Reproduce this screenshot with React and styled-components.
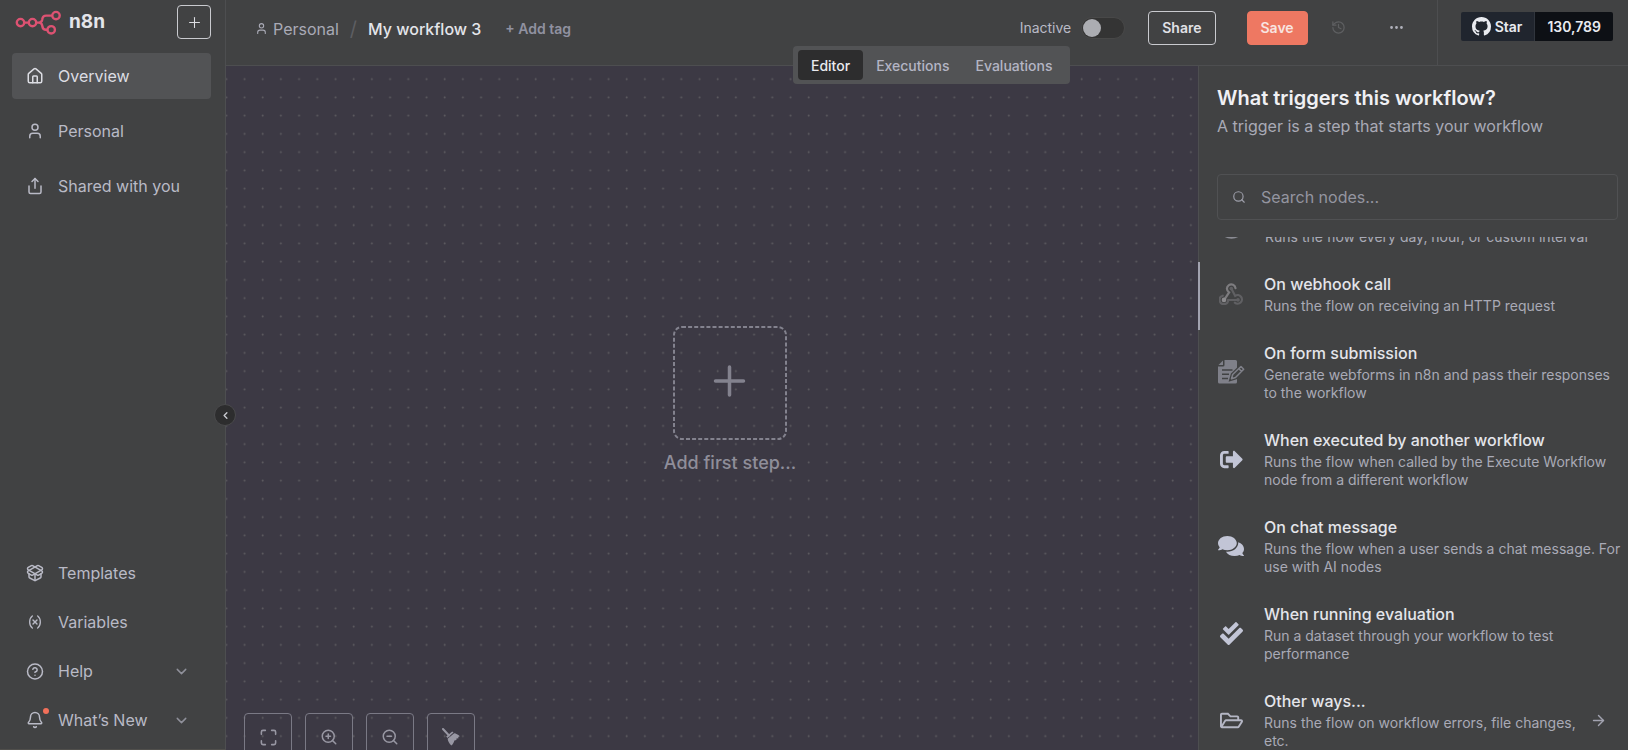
import React, { useEffect, useRef } from "react";
import styled, { createGlobalStyle, css } from "styled-components";
import {
  ArrowRight,
  Bell,
  ChevronDown,
  ChevronLeft,
  CircleQuestionMark,
  Clock,
  Ellipsis,
  History,
  House,
  Maximize,
  PackageOpen,
  Plus,
  Search,
  Share,
  User,
  Variable,
  ZoomIn,
  ZoomOut,
} from "lucide-react";
import {
  FaCheckDouble,
  FaComments,
  FaRegFolderOpen,
  FaSignOutAlt,
} from "react-icons/fa";

const GlobalStyle = createGlobalStyle`
  * {
    box-sizing: border-box;
  }

  body {
    margin: 0;
    background-color: #414243;
    color: #e4e5ea;
    font-family: Inter, "Liberation Sans", sans-serif;
  }

  h1, h2, h3, p, ul {
    margin: 0;
    padding: 0;
  }

  button, input {
    font-family: inherit;
  }

  a {
    color: inherit;
    text-decoration: none;
  }
`;

const Page = styled.div`
  display: flex;
  height: 100vh;
  overflow: hidden;
`;

const Sidebar = styled.aside`
  position: relative;
  flex: 0 0 226px;
  display: flex;
  flex-direction: column;
  justify-content: space-between;
  padding: 5px 14px 6px 12px;
  border-right: 1px solid #4d4e50;
  border-bottom: 1px solid #504f4c;
`;

const SidebarTop = styled.div`
  display: flex;
  align-items: center;
  justify-content: space-between;
  height: 34px;
  margin-bottom: 14px;
`;

const Brand = styled.a`
  display: flex;
  align-items: center;
  gap: 8px;
  padding-left: 3px;
  font-size: 19px;
  line-height: 24px;
  font-weight: 700;
`;

const SquareButton = styled.button`
  display: flex;
  align-items: center;
  justify-content: center;
  width: 34px;
  height: 34px;
  padding: 0;
  border: 1px solid #c9cacf;
  border-radius: 4px;
  background: none;
  color: #dcdde2;
  cursor: pointer;
`;

const Menu = styled.nav`
  display: flex;
  flex-direction: column;
  gap: ${({ $gap }) => $gap};
`;

const MenuItem = styled.a`
  display: flex;
  align-items: center;
  gap: 14px;
  height: 46px;
  padding: 0 21px 0 14px;
  border-radius: 4px;
  font-size: 16px;
  line-height: 24px;
  color: #b9bac6;

  ${({ $active }) =>
    $active &&
    css`
      background-color: #525355;
      color: #dcdde3;
    `}

  .chevron {
    margin-left: auto;
    color: #8f909a;
  }
`;

const MenuIcon = styled.span`
  position: relative;
  display: flex;
  justify-content: center;
  width: 18px;
`;

const Badge = styled.span`
  position: absolute;
  top: -3px;
  right: -5px;
  width: 6px;
  height: 6px;
  border-radius: 50%;
  background-color: #f2705a;
`;

const CollapseButton = styled.button`
  position: absolute;
  top: 404px;
  right: -11px;
  z-index: 2;
  display: flex;
  align-items: center;
  justify-content: center;
  width: 22px;
  height: 22px;
  padding: 0;
  border: 1px solid #4a4a4c;
  border-radius: 50%;
  background-color: #2d2d2e;
  color: #c9cad0;
  cursor: pointer;
`;

const Main = styled.div`
  flex: 1;
  min-width: 0;
  display: flex;
  flex-direction: column;
`;

const Header = styled.header`
  position: relative;
  display: flex;
  flex: 0 0 66px;
  border-bottom: 1px solid #4d4e50;
`;

const HeaderBar = styled.div`
  flex: 1;
  display: flex;
  align-items: center;
  justify-content: space-between;
  padding: 0 32px 10px 29px;
`;

const Breadcrumb = styled.div`
  display: flex;
  align-items: center;
  padding-top: 2px;
  font-size: 16px;
  line-height: 24px;
  color: #a9aab6;

  a {
    display: flex;
    align-items: center;
    gap: 5px;
  }
`;

const Slash = styled.span`
  margin: 0 11px;
  font-size: 20px;
  color: #5d5e62;
`;

const WorkflowName = styled.h1`
  font-size: 16px;
  line-height: 24px;
  font-weight: 500;
  color: #e4e5ea;
`;

const TagButton = styled.button`
  margin-left: 24px;
  padding: 0;
  border: none;
  background: none;
  font-size: 14px;
  font-weight: 600;
  color: #9091a0;
  cursor: pointer;
`;

const Actions = styled.div`
  display: flex;
  align-items: center;
`;

const SwitchLabel = styled.label`
  display: flex;
  align-items: center;
  gap: 10px;
  margin-right: 23px;
  font-size: 14px;
  color: #b9bac6;
`;

const Switch = styled.input`
  appearance: none;
  display: flex;
  align-items: center;
  width: 44px;
  height: 22px;
  margin: 0;
  padding: 1px;
  border: 1px solid #484848;
  border-radius: 11px;
  background-color: #343434;
  cursor: pointer;

  &::before {
    content: "";
    width: 18px;
    height: 18px;
    border-radius: 50%;
    background-color: #acadb2;
  }

  &:checked {
    justify-content: flex-end;
  }
`;

const Button = styled.button`
  height: 34px;
  padding: 0 13px;
  border: 1px solid #c9cacf;
  border-radius: 4px;
  background: none;
  font-size: 14px;
  font-weight: 600;
  color: #e0e1e6;
  cursor: pointer;

  ${({ $primary }) =>
    $primary &&
    css`
      margin: 0 23px 0 31px;
      border-color: #ee7862;
      background-color: #ee7862;
      color: #f8e4e0;
    `}
`;

const IconButton = styled.button`
  display: flex;
  padding: 0;
  border: none;
  background: none;
  color: ${({ $muted }) => ($muted ? "#5e5f61" : "#b0b1bb")};
  cursor: pointer;

  & + & {
    margin-left: 42px;
  }
`;

const GithubArea = styled.div`
  display: flex;
  align-items: center;
  padding: 0 15px 13px 23px;
  border-left: 1px solid #4d4e50;
`;

const GithubButton = styled.div`
  display: flex;
  height: 29px;
  border-radius: 2px;
  overflow: hidden;
  font-size: 14px;
  font-weight: 600;
  color: #e9ebf0;

  a {
    display: flex;
    align-items: center;
    gap: 4px;
    padding: 0 12px 0 11px;
    background-color: #20252e;
  }

  a + a {
    padding: 0 12px;
    border-left: 1px solid #30353d;
    background-color: #0d1015;
  }
`;

const Tabs = styled.div`
  position: absolute;
  top: 46px;
  left: 567px;
  z-index: 1;
  display: flex;
  padding: 4px 5px;
  border-radius: 4px;
  background-color: #525355;
`;

const Tab = styled.button`
  height: 30px;
  padding: 0 13px;
  border: none;
  border-radius: 4px;
  background-color: ${({ $active }) => ($active ? "#2d2d2e" : "transparent")};
  font-size: 14px;
  font-weight: 500;
  color: ${({ $active }) => ($active ? "#e9eaee" : "#b4b5c4")};
  cursor: pointer;
`;

const Workspace = styled.div`
  flex: 1;
  min-height: 0;
  display: flex;
`;

const Canvas = styled.section`
  position: relative;
  flex: 1;
  background-color: #3c3944;
`;

const Grid = styled.svg`
  position: absolute;
  inset: 0;
  width: 100%;
  height: 100%;
`;

const FirstStep = styled.div`
  position: absolute;
  top: 260px;
  left: 447px;
  display: flex;
  flex-direction: column;
  align-items: center;
  gap: 10px;
  width: 114px;
  font-size: 18px;
  line-height: 26px;
  font-weight: 500;
  color: #8f8e9a;
  white-space: nowrap;
`;

const StepButton = styled.button`
  position: relative;
  display: block;
  width: 114px;
  height: 114px;
  padding: 0;
  border: none;
  background: none;
  cursor: pointer;
`;

const CanvasControls = styled.div`
  position: absolute;
  top: 647px;
  left: 18px;
  display: flex;
  gap: 13px;
`;

const ControlButton = styled.button`
  display: flex;
  align-items: center;
  justify-content: center;
  width: 48px;
  height: 48px;
  padding: 0;
  border: 1px solid #7a7985;
  border-radius: 4px;
  background: none;
  color: #9897a3;
  cursor: pointer;
`;

const Panel = styled.aside`
  position: relative;
  flex: 0 0 430px;
  display: flex;
  flex-direction: column;
  border-left: 1px solid #4d4e50;
`;

const ResizeHandle = styled.span`
  position: absolute;
  top: 196px;
  left: -1px;
  width: 2px;
  height: 68px;
  background-color: #a2a3b0;
`;

const PanelHeader = styled.div`
  padding: 18px 10px 0 18px;

  h2 {
    font-size: 20px;
    line-height: 28px;
    font-weight: 600;
    color: #f0f0f4;
  }

  p {
    margin-top: 2px;
    font-size: 16px;
    line-height: 24px;
    color: #a9aab6;
  }
`;

const SearchBox = styled.label`
  display: flex;
  align-items: center;
  gap: 15px;
  height: 46px;
  margin: 36px 10px 17px 18px;
  padding: 0 14px;
  border: 1px solid #505153;
  border-radius: 4px;
  color: #9c9da8;

  input {
    flex: 1;
    min-width: 0;
    padding: 0;
    border: none;
    outline: none;
    background: none;
    font-size: 16px;
    color: #e4e5ea;
  }

  input::placeholder {
    color: #9495a0;
    opacity: 1;
  }
`;

const TriggerList = styled.ul`
  flex: 1;
  min-height: 0;
  overflow-y: auto;
  scrollbar-width: none;
  list-style: none;
`;

const Trigger = styled.li`
  display: flex;
  align-items: center;
  padding: 14px 4px 13px 18px;
`;

const TriggerIcon = styled.span`
  display: flex;
  flex: 0 0 28px;
  justify-content: center;
  margin-right: 19px;
  color: ${({ $color }) => $color};
`;

const TriggerText = styled.div`
  flex: 1;

  h3 {
    min-height: 22px;
    margin-bottom: 2px;
    font-size: 16px;
    line-height: 22px;
    font-weight: 500;
    color: #e4e5ea;
  }

  p {
    font-size: 14px;
    line-height: 18px;
    color: #a9aab6;
  }
`;

const MoreArrow = styled(ArrowRight)`
  margin: 0 17px 0 8px;
  color: #a2a3b0;
`;

const Logo = () => (
  <svg width="46" height="26" viewBox="0 0 46 26" fill="none" stroke="#dd5272" strokeWidth="2.4">
    <circle cx="5.5" cy="13.6" r="3.7" />
    <circle cx="17.5" cy="13.6" r="3.7" />
    <circle cx="41" cy="6.6" r="3.7" />
    <circle cx="36.2" cy="20.8" r="3.7" />
    <path d="M9.2 13.6h4.600M21.200 13.600h2.600c2 0 3-.9 3.400-2.800l.2-1.200c.4-2 1.600-3 3.600-3h6.300M23.800 13.600c2 0 3 .9 3.400 2.800l.2 1.400c.4 2 1.500 3 3.500 3h1.600" />
  </svg>
);

const GithubMark = () => (
  <svg width="19" height="19" viewBox="0 0 16 16" fill="currentColor">
    <path d="M8 0c4.42 0 8 3.58 8 8a8.013 8.013 0 0 1-5.45 7.59c-.4.08-.55-.17-.55-.38 0-.27.01-1.13.01-2.2 0-.75-.25-1.23-.54-1.48 1.78-.2 3.65-.88 3.65-3.95 0-.88-.31-1.59-.82-2.15.08-.2.36-1.02-.08-2.12 0 0-.67-.22-2.2.82-.64-.18-1.32-.27-2-.27-.68 0-1.36.09-2 .27-1.53-1.03-2.2-.82-2.2-.82-.44 1.1-.16 1.92-.08 2.12-.51.56-.82 1.28-.82 2.15 0 3.06 1.86 3.75 3.64 3.95-.23.2-.44.55-.51 1.07-.46.21-1.61.55-2.33-.66-.15-.24-.6-.83-1.23-.82-.67.01-.27.38.01.53.34.19.73.9.82 1.13.16.45.68 1.31 2.69.94 0 .67.01 1.3.01 1.49 0 .21-.15.45-.55.38A7.995 7.995 0 0 1 0 8c0-4.42 3.58-8 8-8Z" />
  </svg>
);

const WebhookIcon = () => (
  <svg width="24" height="22" viewBox="0 0 24 22" fill="none" strokeWidth="2.2" strokeLinecap="round">
    <path d="M12.300 5.500l3.900 7.400a4.300 4.300 0 1 1-.4 6.800M3.800 12.700a4.300 4.300 0 1 0 5.400 4.300H19" stroke="#606063" />
    <circle cx="12.300" cy="5.600" r="1.800" fill="#606063" />
    <circle cx="19" cy="16.900" r="1.800" fill="#606063" />
    <path d="M16.500 5.200a4.300 4.300 0 1 0-6.400 4.200L5.200 16.800" stroke="#7d7c7f" />
    <circle cx="5" cy="16.900" r="2.300" fill="#8b8a8d" />
  </svg>
);

const FormIcon = () => (
  <svg width="27" height="24" viewBox="0 0 27 24" fill="none">
    <path
      d="M6.500 0H17.500A1.500 1.500 0 0 1 19 1.500V22a1.500 1.500 0 0 1-1.500 1.500h-16A1.500 1.500 0 0 1 0 22V6.500h5a1.500 1.500 0 0 0 1.500-1.500z"
      fill="currentColor"
    />
    <path d="M5 .5V5H.5z" fill="currentColor" />
    <path d="M4 10h10.500M4 14.300h7M4 18.600h6" stroke="#414243" strokeWidth="1.500" />
    <path d="M13.500 18.800l1.200-4.300 8.300-8 2.700 2.700-8.200 8.300z" stroke="#414243" strokeWidth="4" />
    <path
      d="M13.500 18.800l1.200-4.300 8.300-8 2.700 2.700-8.200 8.300zM20.800 8.600l2.700 2.700"
      stroke="currentColor"
      strokeWidth="1.500"
      strokeLinejoin="round"
    />
  </svg>
);

const BroomIcon = () => (
  <svg width="18" height="18" viewBox="0 0 18 18" fill="currentColor">
    <path d="M1 1l6 6.500" stroke="currentColor" strokeWidth="2" strokeLinecap="round" />
    <path d="M4.200 8.600l6-5.200 1.300 1.200-6.100 5.400z" />
    <path d="M5.600 10.800l6.600-5.500c1.800.2 3.700 1.300 5.600 3l-1.600.8.300 1.200-2 .1-.1 1.600-2 .4c-.6 1.900-1.500 3.700-2.900 5.200-2-1.700-3.500-4-3.900-6.800z" />
  </svg>
);

const triggers = [
  {
    text: "Runs the flow every day, hour, or custom interval",
    icon: <Clock size={29} />,
    color: "#8a8b93",
  },
  {
    title: "On webhook call",
    text: "Runs the flow on receiving an HTTP request",
    icon: <WebhookIcon />,
    color: "#6d6d70",
  },
  {
    title: "On form submission",
    text: "Generate webforms in n8n and pass their responses to the workflow",
    icon: <FormIcon />,
    color: "#7f8089",
  },
  {
    title: "When executed by another workflow",
    text: "Runs the flow when called by the Execute Workflow node from a different workflow",
    icon: <FaSignOutAlt size={23} />,
    color: "#c2c5d6",
  },
  {
    title: "On chat message",
    text: "Runs the flow when a user sends a chat message. For use with AI nodes",
    icon: <FaComments size={26} />,
    color: "#c2c5d6",
  },
  {
    title: "When running evaluation",
    text: "Run a dataset through your workflow to test performance",
    icon: <FaCheckDouble size={23} />,
    color: "#c2c5d6",
  },
  {
    title: "Other ways...",
    text: "Runs the flow on workflow errors, file changes, etc.",
    icon: <FaRegFolderOpen size={23} />,
    color: "#b4b6c4",
    more: true,
  },
];

export default function App() {
  const listRef = useRef(null);

  useEffect(() => {
    listRef.current.scrollTop = 47;
  }, []);

  return (
    <Page>
      <GlobalStyle />
      <Sidebar>
        <div>
          <SidebarTop>
            <Brand href="#">
              <Logo />
              n8n
            </Brand>
            <SquareButton aria-label="Create">
              <Plus size={17} strokeWidth={1.5} />
            </SquareButton>
          </SidebarTop>
          <Menu $gap="9px">
            <MenuItem href="#" $active>
              <MenuIcon>
                <House size={18} />
              </MenuIcon>
              Overview
            </MenuItem>
            <MenuItem href="#">
              <MenuIcon>
                <User size={18} />
              </MenuIcon>
              Personal
            </MenuItem>
            <MenuItem href="#">
              <MenuIcon>
                <Share size={18} />
              </MenuIcon>
              Shared with you
            </MenuItem>
          </Menu>
        </div>
        <Menu $gap="3px">
          <MenuItem href="#">
            <MenuIcon>
              <PackageOpen size={18} />
            </MenuIcon>
            Templates
          </MenuItem>
          <MenuItem href="#">
            <MenuIcon>
              <Variable size={16} />
            </MenuIcon>
            Variables
          </MenuItem>
          <MenuItem href="#">
            <MenuIcon>
              <CircleQuestionMark size={19} />
            </MenuIcon>
            Help
            <ChevronDown className="chevron" size={17} />
          </MenuItem>
          <MenuItem href="#">
            <MenuIcon>
              <Bell size={18} />
              <Badge />
            </MenuIcon>
            What’s New
            <ChevronDown className="chevron" size={17} />
          </MenuItem>
        </Menu>
        <CollapseButton aria-label="Collapse sidebar">
          <ChevronLeft size={11} strokeWidth={3} />
        </CollapseButton>
      </Sidebar>

      <Main>
        <Header>
          <HeaderBar>
            <Breadcrumb>
              <a href="#">
                <User size={13} />
                Personal
              </a>
              <Slash>/</Slash>
              <WorkflowName>My workflow 3</WorkflowName>
              <TagButton>+ Add tag</TagButton>
            </Breadcrumb>
            <Actions>
              <SwitchLabel>
                Inactive
                <Switch type="checkbox" role="switch" />
              </SwitchLabel>
              <Button>Share</Button>
              <Button $primary>Save</Button>
              <IconButton $muted aria-label="Workflow history">
                <History size={15} />
              </IconButton>
              <IconButton aria-label="More options">
                <Ellipsis size={17} />
              </IconButton>
            </Actions>
          </HeaderBar>
          <GithubArea>
            <GithubButton>
              <a href="#">
                <GithubMark />
                Star
              </a>
              <a href="#">130,789</a>
            </GithubButton>
          </GithubArea>
          <Tabs>
            <Tab $active>Editor</Tab>
            <Tab>Executions</Tab>
            <Tab>Evaluations</Tab>
          </Tabs>
        </Header>

        <Workspace>
          <Canvas>
            <Grid>
              <pattern id="dots" x="-9" y="4" width="18.2" height="18.25" patternUnits="userSpaceOnUse">
                <circle cx="9.3" cy="9.1" r="1" fill="#5d5b60" />
              </pattern>
              <rect width="100%" height="100%" fill="url(#dots)" />
            </Grid>
            <FirstStep>
              <StepButton aria-label="Add first step">
                <svg width="114" height="114" fill="none" stroke="#83828e">
                  <rect x="1" y="1" width="112" height="112" rx="8" strokeWidth="2" strokeDasharray="4 2.1" />
                  <path d="M56.5 41v28M42.500 55h28" strokeWidth="3.5" strokeLinecap="round" />
                </svg>
              </StepButton>
              Add first step...
            </FirstStep>
            <CanvasControls>
              <ControlButton aria-label="Fit view">
                <Maximize size={19} />
              </ControlButton>
              <ControlButton aria-label="Zoom in">
                <ZoomIn size={18} />
              </ControlButton>
              <ControlButton aria-label="Zoom out">
                <ZoomOut size={18} />
              </ControlButton>
              <ControlButton aria-label="Tidy up">
                <BroomIcon />
              </ControlButton>
            </CanvasControls>
          </Canvas>

          <Panel>
            <ResizeHandle />
            <PanelHeader>
              <h2>What triggers this workflow?</h2>
              <p>A trigger is a step that starts your workflow</p>
            </PanelHeader>
            <SearchBox>
              <Search size={14} />
              <input type="text" placeholder="Search nodes..." aria-label="Search nodes" />
            </SearchBox>
            <TriggerList ref={listRef}>
              {triggers.map((item) => (
                <Trigger key={item.text}>
                  <TriggerIcon $color={item.color}>{item.icon}</TriggerIcon>
                  <TriggerText>
                    <h3>{item.title}</h3>
                    <p>{item.text}</p>
                  </TriggerText>
                  {item.more && <MoreArrow size={17} />}
                </Trigger>
              ))}
            </TriggerList>
          </Panel>
        </Workspace>
      </Main>
    </Page>
  );
}
